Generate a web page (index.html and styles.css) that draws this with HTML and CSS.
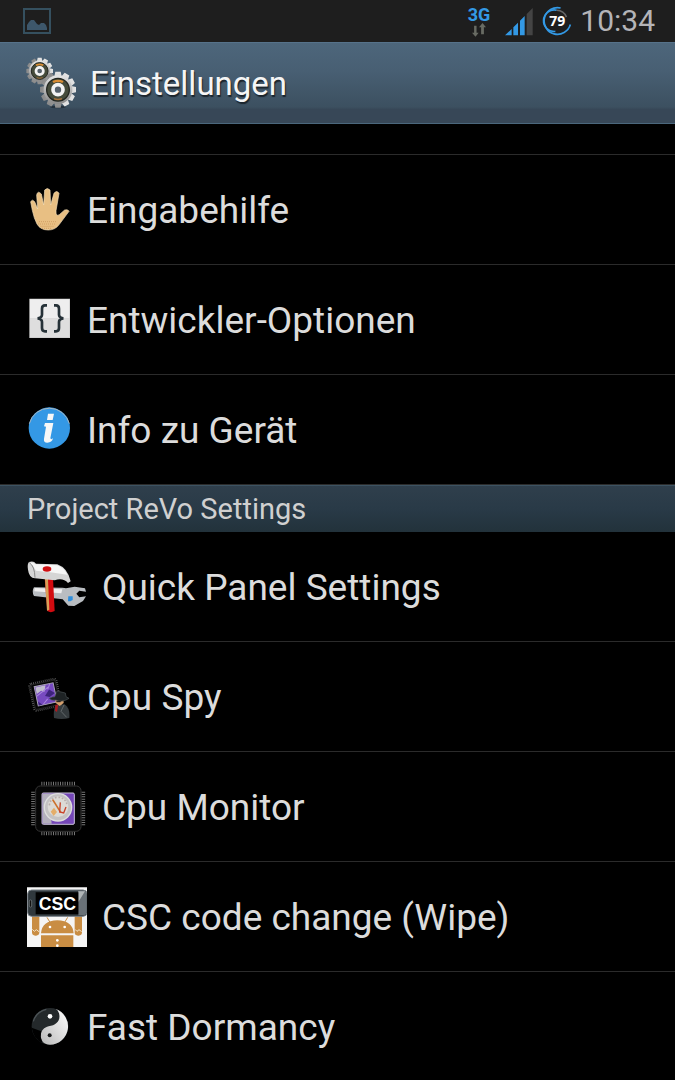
FILE: index.html
```
<!DOCTYPE html>
<html lang="de">
<head>
<meta charset="utf-8">
<meta name="viewport" content="width=device-width, initial-scale=1">
<title>Einstellungen</title>
<link rel="stylesheet" href="styles.css">
</head>
<body>
<div class="status-bar">
  <svg class="status-picture" viewBox="0 0 28 26" aria-hidden="true">
    <rect x="1" y="1" width="26" height="24" fill="none" stroke="#35505f" stroke-width="2"/>
    <path d="M4 22v-5l2-3 2-2 3 0 3 4 2 1 2-2h3l2 2 1 3v2z" fill="#3d576b"/>
  </svg>
  <div class="status-icons">
    <div class="network">
      <span class="network-type">3G</span>
      <svg class="network-arrows" viewBox="0 0 48 40" aria-hidden="true">
        <path d="M10 8h7v20h6l-9 11-10-11h6zM30 32V12h-6L34 0l10 12h-6v20z" fill="#686b63"/>
      </svg>
    </div>
    <svg class="signal" viewBox="0 0 84 84" aria-hidden="true">
      <path d="M65 18L83 0v82H65z" fill="#444"/>
      <path d="M0 82L20 63v19zM25 82V58l14-14v38zM45 82V38l14-14v58z" fill="#3399e5"/>
    </svg>
    <div class="battery">
      <svg class="battery-ring" viewBox="0 0 90 92" aria-hidden="true">
        <g fill="none" stroke-width="5">
          <path d="M56 6A41 41 0 1 0 86 57" stroke="#3399e5"/>
          <path d="M44 13A33 33 0 1 0 40 78" stroke="#3399e5"/>
          <path d="M44 13A33 33 0 0 1 74 34" stroke="#666"/>
        </g>
      </svg>
      <span class="battery-level">79</span>
    </div>
    <time class="clock">10:34</time>
  </div>
</div>

<header class="app-bar">
  <svg class="app-icon" viewBox="0 8 180 180" aria-hidden="true">
    <defs>
      <linearGradient id="steel" x1="0" y1="0" x2="0" y2="1">
        <stop offset="0" stop-color="#e6e6e6"/><stop offset="1" stop-color="#898989"/>
      </linearGradient>
      <g id="gear">
        <g fill="url(#steel)">
          <path d="M-8-54h16l3 14h-22zM-8 54h16l3-14h-22z"/>
          <path d="M-8-54h16l3 14h-22zM-8 54h16l3-14h-22z" transform="rotate(30)"/>
          <path d="M-8-54h16l3 14h-22zM-8 54h16l3-14h-22z" transform="rotate(60)"/>
          <path d="M-8-54h16l3 14h-22zM-8 54h16l3-14h-22z" transform="rotate(90)"/>
          <path d="M-8-54h16l3 14h-22zM-8 54h16l3-14h-22z" transform="rotate(120)"/>
          <path d="M-8-54h16l3 14h-22zM-8 54h16l3-14h-22z" transform="rotate(150)"/>
          <circle r="43"/>
        </g>
        <circle r="34" fill="#454b3b" stroke="#22251f" stroke-width="4"/>
        <path d="M-17-26Q0-34 17-26L13-20Q0-26-13-20z" fill="#d98d34"/>
        <path d="M-12 27Q0 32 12 27" fill="none" stroke="#aa7238" stroke-width="4"/>
        <circle r="15" fill="#56616b" stroke="#f3f3f3" stroke-width="11"/>
      </g>
    </defs>
    <ellipse cx="114" cy="170" rx="24" ry="4" fill="#25323d"/>
    <use href="#gear" transform="translate(59 62) scale(.74)"/>
    <use href="#gear" transform="translate(114 118)"/>
  </svg>
  <h1 class="app-title">Einstellungen</h1>
</header>

<main>
  <ul class="settings-list settings-list-continued">
    <li class="row"><a class="row-link" href="#eingabehilfe">
      <svg class="icon" viewBox="36 36 135 135" aria-hidden="true">
        <path d="M47 80q5-9 12 0l9 22-3-42q3-15 14-3l7 33 3-45q8-9 16 0l2 45 10-35q8-11 15 0l-9 52q-1 19 10 12l16-14q11-3 13 4l-29 39q-12 17-33 17-24 0-34-18-9-17-14-41z" fill="#e8bf83" stroke="#f4dfba" stroke-width="2"/>
        <path d="M72 140h54M69 147h54M77 154h41M82 160h30" stroke="#b57a3c" stroke-width="2" stroke-dasharray="2 4"/>
      </svg><span class="row-label">Eingabehilfe</span></a></li>
    <li class="row"><a class="row-link" href="#entwickler">
      <svg class="icon" viewBox="36 36 135 135" aria-hidden="true">
        <path d="M43 41h122v118H43z" fill="#cfcfcf"/><path d="M45 43h118v57H45z" fill="#eee"/><path d="M45 100h118v56H45z" fill="#dedede"/>
        <path d="M96 61h-6q-9 0-9 10v18q0 9-13 11 13 2 13 11v18q0 10 9 10h6M117 61h6q9 0 9 10v18q0 9 13 11-13 2-13 11v18q0 10-9 10h-6" fill="none" stroke="#263238" stroke-width="8"/>
      </svg><span class="row-label">Entwickler-Optionen</span></a></li>
    <li class="row"><a class="row-link" href="#info">
      <svg class="icon" viewBox="36 36 135 135" aria-hidden="true">
        <circle cx="103" cy="99" r="62" fill="#3498e5"/>
        <path d="M43 86A62 62 0 0 1 163 86" fill="none" stroke="#a8b5bf" stroke-width="3"/>
        <path d="M99 56h18l-4 19H96zM90 84h25l-9 46q2 5 8 0-3 13-17 13-12 0-10-12l6-36-6-1z" fill="#f7f7f7"/>
      </svg><span class="row-label">Info zu Gerät</span></a></li>
  </ul>

  <h2 class="section-title">Project ReVo Settings</h2>
  <ul class="settings-list">
    <li class="row"><a class="row-link" href="#quick-panel">
      <svg class="icon icon-large" viewBox="36 18 180 180" aria-hidden="true">
        <path d="M57 109l86 1 10 2 26-5 31 5 3 10-20-3-9 9 9 11 20-3-9 14-26 15-18-1-17-19-86-10q-8-14 0-26z" fill="#b9bdc1"/>
        <path d="M59 111l83 4-3 12-81-6z" fill="#eee"/>
        <path d="M160 136h13v11l-7 4h-7z" fill="#2e8edc"/>
        <path d="M89 82h25l5 98q-12 7-22 0z" fill="#d20b10"/><path d="M90 84h9l4 92-7 3z" fill="#d7a057"/>
        <path d="M42 33q14-5 21 5l64 2q31 11 40 51l-8 5q-15-17-40-8L60 82q-18-1-21-26-3-16 3-23z" fill="#d5d5d5"/>
        <path d="M43 35q12-3 19 5l64 3q23 8 31 28-44-8-94-12-7-16-20-24z" fill="#f6f6f6"/>
        <path d="M43 35q16 10 17 45" fill="none" stroke="#888" stroke-width="3"/>
        <ellipse cx="96" cy="54" rx="13" ry="8" fill="#cf1013"/>
      </svg><span class="row-label">Quick Panel Settings</span></a></li>
    <li class="row"><a class="row-link" href="#cpu-spy">
      <svg class="icon" viewBox="36 26 135 135" aria-hidden="true">
        <g transform="rotate(-12 90 87)">
          <rect x="49" y="47" width="83" height="83" rx="7" fill="#080808" stroke="#6c6c6c" stroke-width="6" stroke-dasharray="2 4"/>
          <rect x="53" y="51" width="75" height="75" rx="5" fill="#050505" stroke="#252525" stroke-width="3"/>
          <rect x="63" y="58" width="58" height="59" fill="#774ac0" stroke="#aaa4b7" stroke-width="3"/>
          <path d="M66 61h31l-7 18-9-5-15 7z" fill="#c0bdcd"/>
          <path d="M89 92l16-17 15 14-18 9zM65 104l11 12H65z" fill="#3d237b"/>
          <path d="M63 88l40-20M79 115l16-13M110 60l-9 14" stroke="#aa86de" stroke-width="3"/>
        </g>
        <path d="M117 158q-3-29 7-39l25-2q17 12 14 41-23 6-46 0z" fill="#343a3d"/>
        <path d="M130 118l-4 22-6-4 1-18z" fill="#aa1b20"/>
        <path d="M120 101l25-2 1 14-12 9-12-9z" fill="#d4a06e"/>
        <path d="M103 99q11-6 16-4l7-18 25 6 2 11 9 5q-20 14-40 5-13 3-19-5z" fill="#1e2325" stroke="#4a5255" stroke-width="2"/>
        <path d="M124 109h13" stroke="#111" stroke-width="3"/><path d="M147 119l-9 19 17 18" fill="none" stroke="#62686a" stroke-width="3"/>
      </svg><span class="row-label">Cpu Spy</span></a></li>
    <li class="row"><a class="row-link" href="#cpu-monitor">
      <svg class="icon icon-large" viewBox="36 18 180 180" aria-hidden="true">
        <g fill="none" stroke="#747474" stroke-width="11" stroke-dasharray="3 4">
          <path d="M79 38h105M79 187h105M54 62v103M205 62v103"/>
        </g>
        <rect x="62" y="45" width="136" height="136" rx="14" fill="#070707" stroke="#343434" stroke-width="3"/>
        <rect x="81" y="66" width="97" height="94" rx="4" fill="#7547b8" stroke="#c8c1d7" stroke-width="3"/>
        <path d="M82 68h43l-20 34 5 56H83z" fill="#b4b0bd"/>
        <circle cx="129" cy="109" r="41" fill="#c4c2c3" stroke="#dedede" stroke-width="4"/>
        <circle cx="129" cy="107" r="31" fill="#dcdad6"/>
        <path d="M103 103q3-24 26-24t28 25" fill="none" stroke="#b9adaa" stroke-width="5" stroke-dasharray="5 5"/>
        <path d="M107 122l10-12 9 13-10 12z" fill="#e4ad68"/>
        <path d="M113 86l24 38" fill="none" stroke="#cc702b" stroke-width="5"/>
        <path d="M136 94l-2 29 12 3 7-18" fill="none" stroke="#c9432b" stroke-width="4"/>
      </svg><span class="row-label">Cpu Monitor</span></a></li>
    <li class="row"><a class="row-link" href="#csc">
      <svg class="icon icon-large" viewBox="36 35 180 180" aria-hidden="true">
        <path d="M36 36h183v180H36z" fill="#f5f5f5"/>
        <g fill="#c98d43">
          <path d="M78 174q3-38 49-39 46 1 49 39zM78 180h97v36H78z"/>
          <rect x="51" y="112" width="22" height="69" rx="10"/><rect x="179" y="112" width="22" height="69" rx="10"/>
        </g>
        <path d="M96 126l9 15M158 126l-9 15" stroke="#c98d43" stroke-width="3"/>
        <path d="M52 162l6 6 6-5 8 6M180 162l6 6 6-5 8 6" fill="none" stroke="#f1e2c8" stroke-width="3"/>
        <g fill="#fff"><circle cx="105" cy="155" r="4"/><circle cx="149" cy="155" r="4"/><circle cx="127" cy="195" r="4"/><circle cx="127" cy="211" r="4"/></g>
        <rect x="38" y="44" width="178" height="79" rx="12" fill="#30383d" stroke="#788087" stroke-width="3"/>
        <path d="M190 46h17q8 2 8 12v50q0 12-10 12h-15z" fill="#697177"/><path d="M190 48h20l-20 32z" fill="#b1b6b8"/>
        <path d="M62 51h128v66H62z" fill="#010101"/>
        <rect x="43" y="74" width="7" height="21" rx="3" fill="#111" stroke="#7e878b" stroke-width="2"/>
        <text class="csc-text" x="127" y="103" text-anchor="middle">CSC</text>
      </svg><span class="row-label">CSC code change (Wipe)</span></a></li>
    <li class="row"><a class="row-link" href="#fast-dormancy">
      <svg class="icon" viewBox="36 26 135 135" aria-hidden="true">
        <defs><linearGradient id="yang" x1="1" y1="0" x2="0" y2="1"><stop offset="0" stop-color="#fff"/><stop offset="1" stop-color="#b8b8b8"/></linearGradient></defs>
        <circle cx="105" cy="93" r="55" fill="#24292b"/>
        <path d="M122 41A55 55 0 0 1 105 148C88 148 77 136 77 121 77 106 88 96 101 93 124 90 138 76 132 54Q129 44 122 41z" fill="url(#yang)"/>
        <path d="M50 97Q56 132 82 142L77 124 79 108z" fill="#000"/>
        <circle cx="105" cy="63" r="7" fill="#fff"/><circle cx="104" cy="120" r="6" fill="#17191a"/>
        <path d="M55 78Q64 49 94 42" fill="none" stroke="#4c5356" stroke-width="4"/>
      </svg><span class="row-label">Fast Dormancy</span></a></li>
  </ul>
</main>
</body>
</html>
```
FILE: styles.css
```
* {
  box-sizing: border-box;
}

body {
  margin: 0;
  background: #000;
  color: #dcdcdc;
  font-family: Roboto, "Noto Sans", sans-serif;
  overflow-x: hidden;
  scrollbar-width: none;
}

.status-bar {
  display: flex;
  align-items: center;
  justify-content: space-between;
  height: 42px;
  padding: 0 20px 0 23px;
  background: #1e1e1e;
}

.status-picture {
  width: 28px;
  height: 26px;
}

.status-icons {
  display: flex;
  align-items: center;
}

.network {
  display: flex;
  flex-direction: column;
  align-items: center;
  margin-right: 15px;
  padding-top: 2px;
}

.network-type {
  color: #3399e5;
  font-size: 18px;
  font-weight: 700;
  line-height: 16px;
}

.network-arrows {
  width: 18px;
  height: 14px;
}

.signal {
  width: 28px;
  height: 28px;
  margin-top: 2px;
  margin-right: 9px;
}

.battery {
  display: grid;
  place-items: center;
  margin-right: 8px;
}

.battery-ring,
.battery-level {
  grid-area: 1 / 1;
}

.battery-ring {
  width: 30px;
  height: 30px;
}

.battery-level {
  color: #fff;
  font-family: "Noto Sans", sans-serif;
  font-size: 14px;
  font-weight: 700;
  line-height: 20px;
}

.clock {
  color: #b4b4b8;
  font-size: 30px;
  line-height: 42px;
}

.app-bar {
  display: flex;
  align-items: center;
  gap: 10px;
  height: 82px;
  padding-left: 20px;
  border-top: 1px solid #56728a;
  border-bottom: 1px solid #4b677c;
  background: linear-gradient(#4d667b 0%, #485f73 35%, #3c5060 80%, #374757 83%);
}

.app-icon {
  width: 60px;
  height: 60px;
}

.app-title {
  margin: 0;
  padding-top: 2px;
  color: #f5f5f5;
  font-size: 33px;
  font-weight: 400;
  line-height: 40px;
  text-shadow: 1px 2px 1px #1b242c;
}

.settings-list {
  margin: 0;
  padding: 0;
  list-style: none;
}

.settings-list-continued {
  margin-top: 30px;
  border-top: 1px solid #2b2b2b;
}

.row {
  border-bottom: 1px solid #2b2b2b;
}

.row-link {
  display: flex;
  align-items: center;
  gap: 15px;
  height: 109px;
  padding: 0 27px;
  color: inherit;
  font-size: 37px;
  line-height: 48px;
  text-decoration: none;
  white-space: nowrap;
}

.row-label {
  padding-top: 3px;
}

.icon {
  flex: none;
  width: 45px;
  height: 45px;
}

.icon-large {
  width: 60px;
  height: 60px;
}

.csc-text {
  fill: #fff;
  font: 700 53px "Liberation Sans", sans-serif;
}

.section-title {
  height: 47px;
  margin: 0;
  padding-left: 27px;
  border-top: 1px solid #3d5362;
  background: linear-gradient(#2f3f4c, #293a47 50%, #22323b);
  color: #d0d0d0;
  font-size: 29px;
  font-weight: 400;
  line-height: 47px;
}
```
